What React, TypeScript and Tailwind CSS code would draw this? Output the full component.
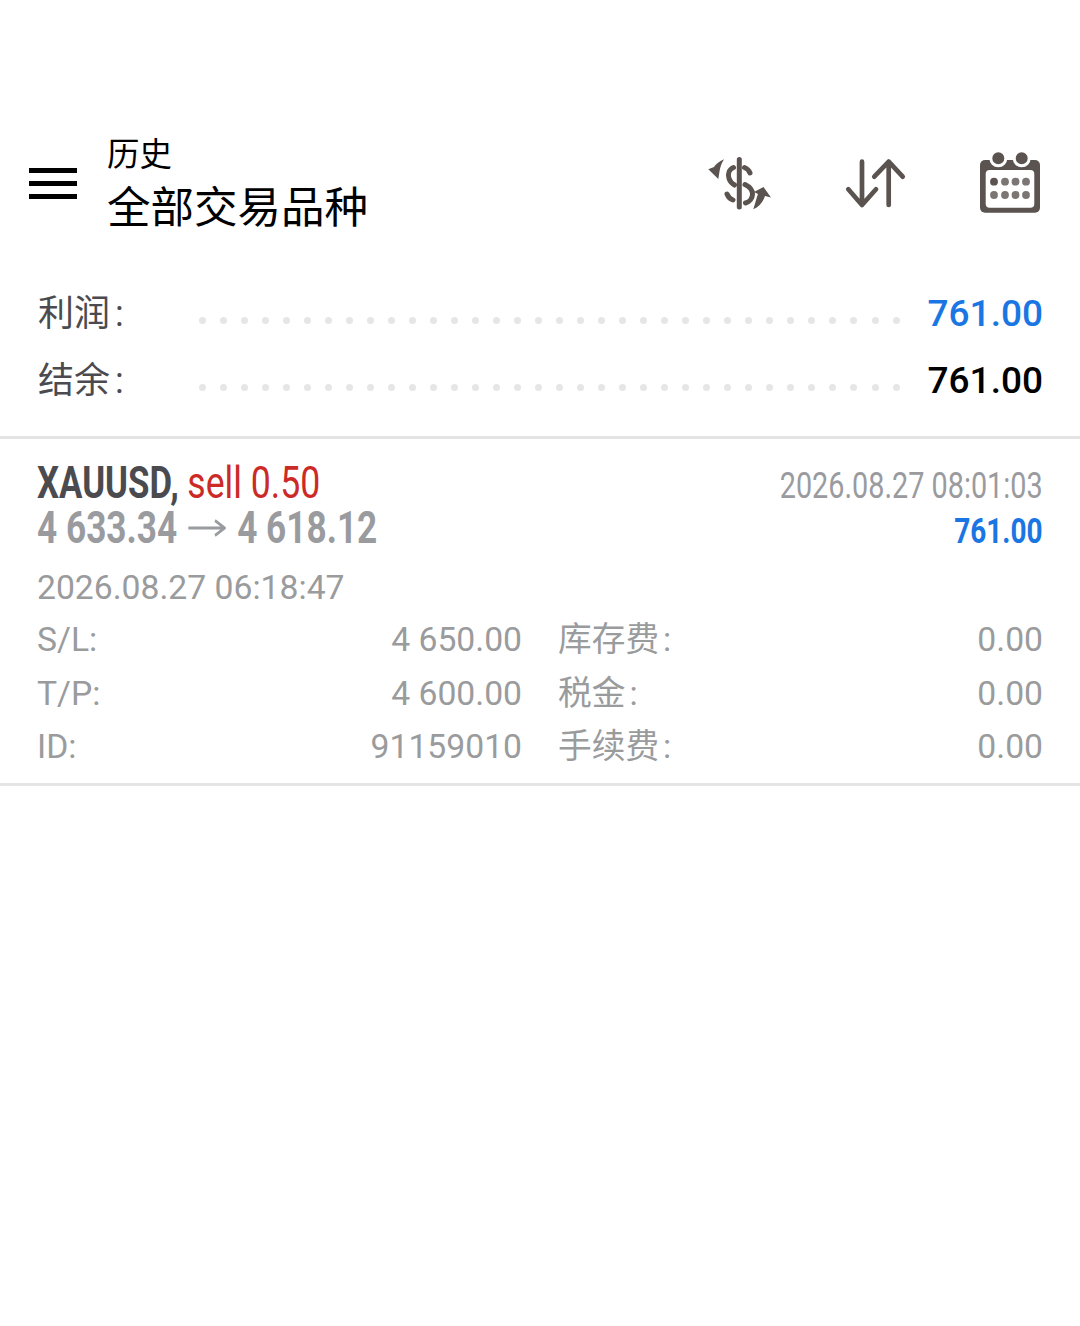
const cjk = "font-['Roboto','Noto_Sans_CJK_SC',sans-serif]";

const DollarIcon = () => (
  <svg width="80" height="66" viewBox="0 0 80 66" fill="none" stroke="#5a5350" strokeWidth="5" strokeLinecap="round">
    <path d="M39.300 9.500V57" />
    <path d="M33.500 17.500C29 19.500 27.500 24 29 28.500C30 31.500 32 33.500 34.500 35" />
    <path d="M44.500 17.500C47 18.500 49 20.500 50 23" />
    <path d="M45 34.500C50 37 52.500 40 52.500 44C52.500 48.500 49.500 52 45.500 53" />
    <path d="M27 44C28 46.500 30 49 33 50" />
    <path d="M24 9.300C19 11.500 15.500 14.500 14 17L8.300 19.300L18.300 29L19.300 22.700C20 17.500 21.500 13 24 9.300Z" fill="#5a5350" stroke="none" />
    <path d="M53.300 59.300C55 54 56.500 48 58 44L54 42L63.500 37L71 47.500L65 46C63 52 59 57 53.300 59.300Z" fill="#5a5350" stroke="none" />
  </svg>
);

const SortIcon = () => (
  <svg width="74" height="66" viewBox="0 0 74 66" fill="none" stroke="#5a5350" strokeWidth="4.700" strokeLinecap="round" strokeLinejoin="round">
    <path d="M22 11.700V55M8.300 39.300L22 55L36 39.300" />
    <path d="M48.700 55V11.700M34.300 26.700L48.700 11.700L62.700 26.700" />
  </svg>
);

const CalendarIcon = () => (
  <svg width="80" height="74" viewBox="0 0 80 74">
    <rect x="10" y="15" width="60" height="52.700" rx="5" fill="#5a5350" />
    <circle cx="28.300" cy="13.300" r="7.500" stroke="#fff" strokeWidth="3" fill="#5a5350" />
    <circle cx="51.700" cy="13.300" r="7.500" stroke="#fff" strokeWidth="3" fill="#5a5350" />
    <rect x="15.700" y="25" width="48.600" height="37.700" rx="4" fill="#fff" />
    <circle cx="24" cy="36.700" r="3.900" fill="#5a5350" />
    {[35, 45.500, 56].map((x) => <circle key={x} cx={x} cy="36.700" r="3.900" fill="#7b7573" />)}
    {[24, 35, 45.500, 56].map((x) => <circle key={x} cx={x} cy="50" r="3.900" fill="#7b7573" />)}
  </svg>
);

const Arrow = () => (
  <svg className="inline-block align-middle mx-[14px] -mt-[6px]" width="47" height="18" viewBox="0 0 47 18" fill="none" stroke="#9a9b9f" strokeWidth="3">
    <path d="M0 9H45.500M33.500 1.500L45.500 9L33.500 16.500" />
  </svg>
);

const Dots = () => (
  <div className="flex-1 flex justify-between mt-[14px] mr-[28px]">
    {Array.from({ length: 34 }).map((_, i) => (
      <span key={i} className="w-[7px] h-[7px] rounded-full bg-[#e6e6e6]" />
    ))}
  </div>
);

const SummaryRow = ({ label, value, color }: { label: string; value: string; color: string }) => (
  <div className="flex items-center h-[67px]">
    <span className={`w-[162px] pl-[1px] text-[36px] text-[#4b4b4f] whitespace-nowrap ${cjk}`}>
      {label}<span className="ml-[5px]">:</span>
    </span>
    <Dots />
    <span className={`text-[37px] font-medium leading-none ${color}`}>{value}</span>
  </div>
);

const Detail = ({ label, value, wide }: { label: string; value: string; wide?: boolean }) => (
  <div className="flex justify-between items-center h-[53.500px] text-[33.700px] text-[#9a9b9d]">
    <span className={cjk}>
      {label}<span className={wide ? "ml-[4px]" : ""}>:</span>
    </span>
    <span>{value}</span>
  </div>
);

export default function App() {
  return (
    <div className="w-[1080px] h-[1326px] bg-white font-['Roboto',sans-serif] overflow-hidden">
      <header className="flex items-center h-[108px] mt-[130px] pl-[29px] pr-[30px]">
        <div className="flex flex-col gap-[8px] w-[48px] shrink-0 -mt-[1px]">
          <span className="h-[5px] bg-black" />
          <span className="h-[5px] bg-black" />
          <span className="h-[5px] bg-black" />
        </div>
        <div className={`ml-[30px] mt-[3px] flex-1 text-black ${cjk}`}>
          <div className="text-[32.500px] leading-[46px]">历史</div>
          <div className="text-[43.500px] leading-[62px]">全部交易品种</div>
        </div>
        <div className="flex items-start gap-[60px] mt-[-4px]">
          <div className="mt-[5px]"><DollarIcon /></div>
          <div className="mt-[5px]"><SortIcon /></div>
          <div className="-ml-[4px]"><CalendarIcon /></div>
        </div>
      </header>

      <section className="mt-[42px] px-[37px] pb-[22px] border-b-[3px] border-[#e4e4e4]">
        <SummaryRow label="利润" value="761.00" color="text-[#1a76e3]" />
        <SummaryRow label="结余" value="761.00" color="text-black" />
      </section>

      <section className="px-[37px] pt-[22px] pb-[8px] border-b-[3px] border-[#e4e4e4]">
        <div className="flex justify-between">
          <div className="origin-left scale-x-[0.8] whitespace-nowrap w-[420px]">
            <div className="leading-[45px] font-bold text-[#4b4b4f] text-[43.500px]">
              XAUUSD, <span className="text-[44.500px] font-normal text-[#cc2a27]">sell 0.50</span>
            </div>
            <div className="text-[44px] leading-[45px] font-bold text-[#9a9b9f]">
              4 633.34<Arrow />4 618.12
            </div>
          </div>
          <div className="origin-right scale-x-[0.8] whitespace-nowrap text-right pt-[3px]">
            <div className="text-[36px] leading-[45px] text-[#9a9b9f]">2026.08.27 08:01:03</div>
            <div className="text-[35px] leading-[45px] font-bold text-[#1a76e3]">761.00</div>
          </div>
        </div>
        <div className="mt-[12px] text-[33.700px] leading-[44px] text-[#9a9b9d]">2026.08.27 06:18:47</div>
        <div className="grid grid-cols-2 gap-x-[36px] mt-[4px]">
          <Detail label="S/L" value="4 650.00" />
          <Detail label="库存费" value="0.00" wide />
          <Detail label="T/P" value="4 600.00" />
          <Detail label="税金" value="0.00" wide />
          <Detail label="ID" value="91159010" />
          <Detail label="手续费" value="0.00" wide />
        </div>
      </section>
    </div>
  );
}
